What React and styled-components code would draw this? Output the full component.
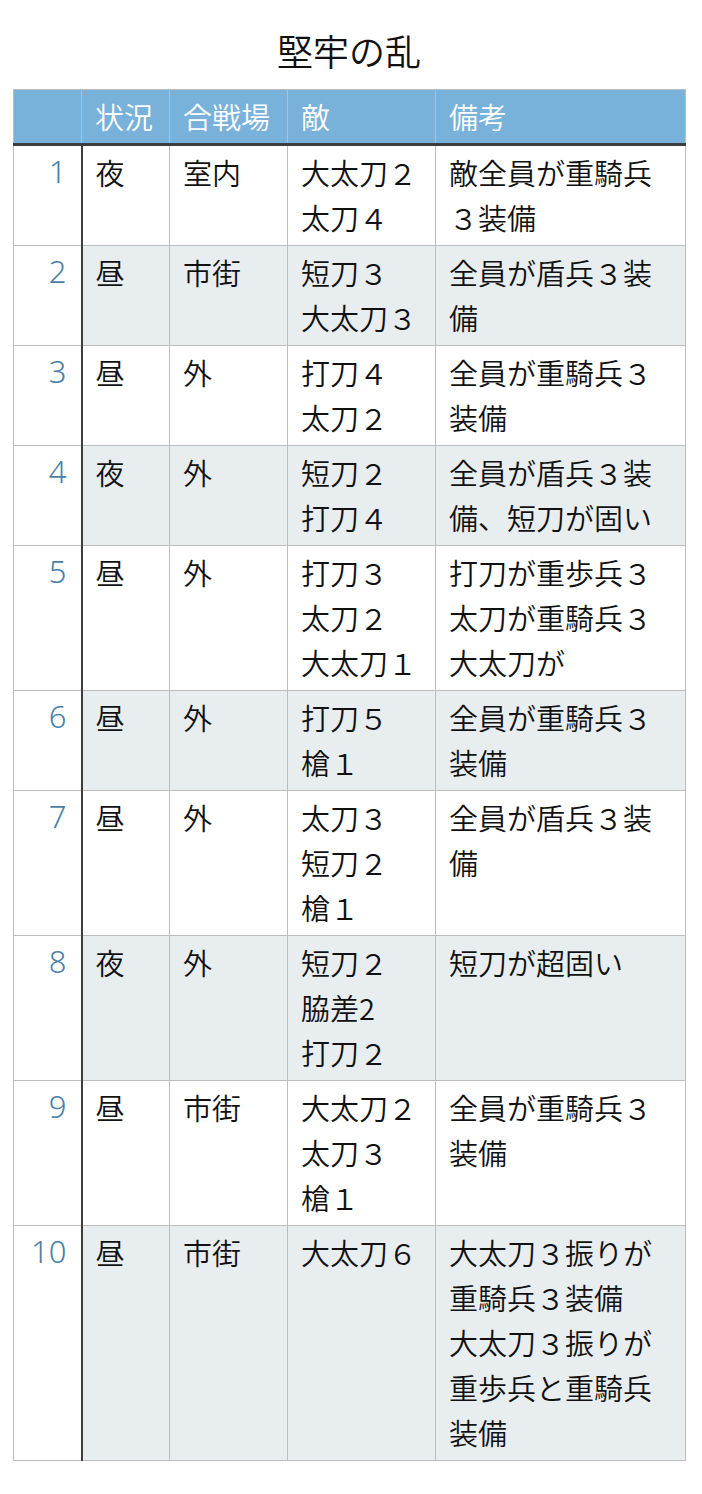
import React from "react";
import styled, { createGlobalStyle } from "styled-components";

const GlobalStyle = createGlobalStyle`
  html, body {
    margin: 0;
    padding: 0;
    background: #ffffff;
  }
  body {
    font-family: "Noto Sans CJK JP", "Noto Sans", sans-serif;
    font-weight: 350;
    color: #111111;
  }
`;

const Page = styled.div`
  width: 702px;
  padding: 0 0 34px 13px;
  box-sizing: border-box;
`;

const Title = styled.h1`
  margin: 0;
  padding-top: 27px;
  height: 62px;
  line-height: 46px;
  font-size: 36px;
  font-weight: 350;
  text-align: center;
  width: 672px;
`;

const Table = styled.table`
  width: 672px;
  border-collapse: collapse;
  table-layout: fixed;
  border: 1px solid #bdbdbd;
  font-size: 29px;
  line-height: 45px;
`;

const HeadCell = styled.th`
  background: #78b1d9;
  color: #ffffff;
  font-weight: 350;
  text-align: left;
  height: 53px;
  padding: 0 0 0 13px;
  border: 1px solid #bdbdbd;
  border-bottom: 3px solid #3d3d3d;
  vertical-align: middle;
`;

const NumCell = styled.td`
  background: #ffffff;
  color: #4a7fa6;
  font-family: "Noto Sans", "Open Sans", sans-serif;
  font-weight: 300;
  font-size: 31px;
  text-align: right;
  vertical-align: top;
  padding: 3px 14px 4px 0;
  border: 1px solid #bdbdbd;
  border-right: 2px solid #3d3d3d;
`;

const Cell = styled.td`
  background: ${(p) => (p.$shaded ? "#e8edf0" : "#ffffff")};
  vertical-align: top;
  padding: 4px 4px 5px 13px;
  border: 1px solid #bdbdbd;
  white-space: nowrap;
`;

const Line = styled.div``;

const rows = [
  ["夜", "室内", ["大太刀２", "太刀４"], ["敵全員が重騎兵", "３装備"]],
  ["昼", "市街", ["短刀３", "大太刀３"], ["全員が盾兵３装", "備"]],
  ["昼", "外", ["打刀４", "太刀２"], ["全員が重騎兵３", "装備"]],
  ["夜", "外", ["短刀２", "打刀４"], ["全員が盾兵３装", "備、短刀が固い"]],
  ["昼", "外", ["打刀３", "太刀２", "大太刀１"], ["打刀が重歩兵３", "太刀が重騎兵３", "大太刀が"]],
  ["昼", "外", ["打刀５", "槍１"], ["全員が重騎兵３", "装備"]],
  ["昼", "外", ["太刀３", "短刀２", "槍１"], ["全員が盾兵３装", "備"]],
  ["夜", "外", ["短刀２", "脇差2", "打刀２"], ["短刀が超固い"]],
  ["昼", "市街", ["大太刀２", "太刀３", "槍１"], ["全員が重騎兵３", "装備"]],
  [
    "昼",
    "市街",
    ["大太刀６"],
    ["大太刀３振りが", "重騎兵３装備", "大太刀３振りが", "重歩兵と重騎兵", "装備"],
  ],
];

const Lines = ({ items }) => items.map((t, i) => <Line key={i}>{t}</Line>);

export default function App() {
  return (
    <Page>
      <GlobalStyle />
      <Title>堅牢の乱</Title>
      <Table>
        <colgroup>
          <col style={{ width: 68 }} />
          <col style={{ width: 88 }} />
          <col style={{ width: 118 }} />
          <col style={{ width: 148 }} />
          <col style={{ width: 250 }} />
        </colgroup>
        <thead>
          <tr>
            <HeadCell />
            <HeadCell>状況</HeadCell>
            <HeadCell>合戦場</HeadCell>
            <HeadCell>敵</HeadCell>
            <HeadCell>備考</HeadCell>
          </tr>
        </thead>
        <tbody>
          {rows.map(([time, place, enemy, note], i) => {
            const shaded = i % 2 === 1;
            return (
              <tr key={i}>
                <NumCell>{i + 1}</NumCell>
                <Cell $shaded={shaded}>{time}</Cell>
                <Cell $shaded={shaded}>{place}</Cell>
                <Cell $shaded={shaded}>
                  <Lines items={enemy} />
                </Cell>
                <Cell $shaded={shaded}>
                  <Lines items={note} />
                </Cell>
              </tr>
            );
          })}
        </tbody>
      </Table>
    </Page>
  );
}
